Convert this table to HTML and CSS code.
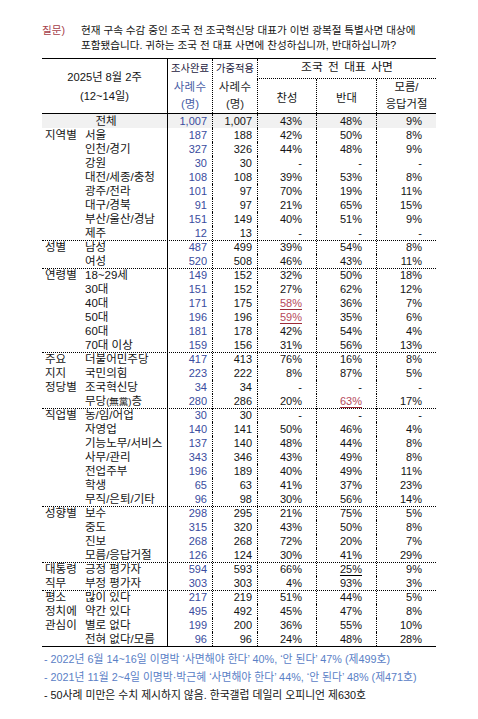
FILE: index.html
```html
<!DOCTYPE html>
<html lang="ko">
<head>
<meta charset="utf-8">
<title>조국 전 대표 사면 여론조사</title>
<link rel="stylesheet" href="styles.css">
</head>
<body>
<div class="page">
  <div class="q">
    <div class="q-label">질문)</div>
    <div class="q-text">현재 구속 수감 중인 조국 전 조국혁신당 대표가 이번 광복절 특별사면 대상에<br>포함됐습니다. 귀하는 조국 전 대표 사면에 찬성하십니까, 반대하십니까?</div>
  </div>

  <div class="tbl">
    <div class="head">
      <div class="h-label"><span>2025년 8월 2주</span><span>(12~14일)</span></div>
      <div class="h-n h-n1"><span class="h-top">조사완료</span><span class="h-mid">사례수</span><span class="h-bot">(명)</span></div>
      <div class="h-n h-n2"><span class="h-top">가중적용</span><span class="h-mid">사례수</span><span class="h-bot">(명)</span></div>
      <div class="h-title">조국 전 대표 사면</div>
      <div class="h-opt h-yes">찬성</div>
      <div class="h-opt h-no">반대</div>
      <div class="h-opt h-dk"><span>모름/</span><span>응답거절</span></div>
    </div>

    <div class="body">
      <div class="row total"><span class="g all">전체</span><span class="n1">1,007</span><span class="n2">1,007</span><span class="p">43%</span><span class="p">48%</span><span class="p">9%</span></div>

      <div class="row"><span class="g">지역별</span><span class="s">서울</span><span class="n1">187</span><span class="n2">188</span><span class="p">42%</span><span class="p">50%</span><span class="p">8%</span></div>
      <div class="row"><span class="g"></span><span class="s">인천/경기</span><span class="n1">327</span><span class="n2">326</span><span class="p">44%</span><span class="p">48%</span><span class="p">9%</span></div>
      <div class="row"><span class="g"></span><span class="s">강원</span><span class="n1">30</span><span class="n2">30</span><span class="p">-</span><span class="p">-</span><span class="p">-</span></div>
      <div class="row"><span class="g"></span><span class="s">대전/세종/충청</span><span class="n1">108</span><span class="n2">108</span><span class="p">39%</span><span class="p">53%</span><span class="p">8%</span></div>
      <div class="row"><span class="g"></span><span class="s">광주/전라</span><span class="n1">101</span><span class="n2">97</span><span class="p">70%</span><span class="p">19%</span><span class="p">11%</span></div>
      <div class="row"><span class="g"></span><span class="s">대구/경북</span><span class="n1">91</span><span class="n2">97</span><span class="p">21%</span><span class="p">65%</span><span class="p">15%</span></div>
      <div class="row"><span class="g"></span><span class="s">부산/울산/경남</span><span class="n1">151</span><span class="n2">149</span><span class="p">40%</span><span class="p">51%</span><span class="p">9%</span></div>
      <div class="row"><span class="g"></span><span class="s">제주</span><span class="n1">12</span><span class="n2">13</span><span class="p">-</span><span class="p">-</span><span class="p">-</span></div>

      <div class="row sep"><span class="g">성별</span><span class="s">남성</span><span class="n1">487</span><span class="n2">499</span><span class="p">39%</span><span class="p">54%</span><span class="p">8%</span></div>
      <div class="row"><span class="g"></span><span class="s">여성</span><span class="n1">520</span><span class="n2">508</span><span class="p">46%</span><span class="p">43%</span><span class="p">11%</span></div>

      <div class="row sep"><span class="g">연령별</span><span class="s">18~29세</span><span class="n1">149</span><span class="n2">152</span><span class="p">32%</span><span class="p">50%</span><span class="p">18%</span></div>
      <div class="row"><span class="g"></span><span class="s">30대</span><span class="n1">151</span><span class="n2">152</span><span class="p">27%</span><span class="p">62%</span><span class="p">12%</span></div>
      <div class="row"><span class="g"></span><span class="s">40대</span><span class="n1">171</span><span class="n2">175</span><span class="p"><u class="hi">58%</u></span><span class="p">36%</span><span class="p">7%</span></div>
      <div class="row"><span class="g"></span><span class="s">50대</span><span class="n1">196</span><span class="n2">196</span><span class="p"><u class="hi">59%</u></span><span class="p">35%</span><span class="p">6%</span></div>
      <div class="row"><span class="g"></span><span class="s">60대</span><span class="n1">181</span><span class="n2">178</span><span class="p">42%</span><span class="p">54%</span><span class="p">4%</span></div>
      <div class="row"><span class="g"></span><span class="s">70대 이상</span><span class="n1">159</span><span class="n2">156</span><span class="p">31%</span><span class="p">56%</span><span class="p">13%</span></div>

      <div class="row sep"><span class="g">주요</span><span class="s">더불어민주당</span><span class="n1">417</span><span class="n2">413</span><span class="p">76%</span><span class="p">16%</span><span class="p">8%</span></div>
      <div class="row"><span class="g">지지</span><span class="s">국민의힘</span><span class="n1">223</span><span class="n2">222</span><span class="p">8%</span><span class="p">87%</span><span class="p">5%</span></div>
      <div class="row"><span class="g">정당별</span><span class="s">조국혁신당</span><span class="n1">34</span><span class="n2">34</span><span class="p">-</span><span class="p">-</span><span class="p">-</span></div>
      <div class="row"><span class="g"></span><span class="s">무당<small>(無黨)</small>층</span><span class="n1">280</span><span class="n2">286</span><span class="p">20%</span><span class="p"><u class="hi">63%</u></span><span class="p">17%</span></div>

      <div class="row sep"><span class="g">직업별</span><span class="s">농/임/어업</span><span class="n1">30</span><span class="n2">30</span><span class="p">-</span><span class="p">-</span><span class="p">-</span></div>
      <div class="row"><span class="g"></span><span class="s">자영업</span><span class="n1">140</span><span class="n2">141</span><span class="p">50%</span><span class="p">46%</span><span class="p">4%</span></div>
      <div class="row"><span class="g"></span><span class="s">기능노무/서비스</span><span class="n1">137</span><span class="n2">140</span><span class="p">48%</span><span class="p">44%</span><span class="p">8%</span></div>
      <div class="row"><span class="g"></span><span class="s">사무/관리</span><span class="n1">343</span><span class="n2">346</span><span class="p">43%</span><span class="p">49%</span><span class="p">8%</span></div>
      <div class="row"><span class="g"></span><span class="s">전업주부</span><span class="n1">196</span><span class="n2">189</span><span class="p">40%</span><span class="p">49%</span><span class="p">11%</span></div>
      <div class="row"><span class="g"></span><span class="s">학생</span><span class="n1">65</span><span class="n2">63</span><span class="p">41%</span><span class="p">37%</span><span class="p">23%</span></div>
      <div class="row"><span class="g"></span><span class="s">무직/은퇴/기타</span><span class="n1">96</span><span class="n2">98</span><span class="p">30%</span><span class="p">56%</span><span class="p">14%</span></div>

      <div class="row sep"><span class="g">성향별</span><span class="s">보수</span><span class="n1">298</span><span class="n2">295</span><span class="p">21%</span><span class="p">75%</span><span class="p">5%</span></div>
      <div class="row"><span class="g"></span><span class="s">중도</span><span class="n1">315</span><span class="n2">320</span><span class="p">43%</span><span class="p">50%</span><span class="p">8%</span></div>
      <div class="row"><span class="g"></span><span class="s">진보</span><span class="n1">268</span><span class="n2">268</span><span class="p">72%</span><span class="p">20%</span><span class="p">7%</span></div>
      <div class="row"><span class="g"></span><span class="s">모름/응답거절</span><span class="n1">126</span><span class="n2">124</span><span class="p">30%</span><span class="p">41%</span><span class="p">29%</span></div>

      <div class="row sep"><span class="g">대통령</span><span class="s">긍정 평가자</span><span class="n1">594</span><span class="n2">593</span><span class="p">66%</span><span class="p"><u class="ul">25%</u></span><span class="p">9%</span></div>
      <div class="row"><span class="g">직무</span><span class="s">부정 평가자</span><span class="n1">303</span><span class="n2">303</span><span class="p">4%</span><span class="p">93%</span><span class="p">3%</span></div>

      <div class="row sep"><span class="g">평소</span><span class="s">많이 있다</span><span class="n1">217</span><span class="n2">219</span><span class="p">51%</span><span class="p">44%</span><span class="p">5%</span></div>
      <div class="row"><span class="g">정치에</span><span class="s">약간 있다</span><span class="n1">495</span><span class="n2">492</span><span class="p">45%</span><span class="p">47%</span><span class="p">8%</span></div>
      <div class="row"><span class="g">관심이</span><span class="s">별로 없다</span><span class="n1">199</span><span class="n2">200</span><span class="p">36%</span><span class="p">55%</span><span class="p">10%</span></div>
      <div class="row last"><span class="g"></span><span class="s">전혀 없다/모름</span><span class="n1">96</span><span class="n2">96</span><span class="p">24%</span><span class="p">48%</span><span class="p">28%</span></div>
    </div>
  </div>

  <div class="notes">
    <p class="note blue">- 2022년 6월 14~16일 이명박 ‘사면해야 한다’ 40%, ‘안 된다’ 47% (제499호)</p>
    <p class="note blue">- 2021년 11월 2~4일 이명박·박근혜 ‘사면해야 한다’ 44%, ‘안 된다’ 48% (제471호)</p>
    <p class="note">- 50사례 미만은 수치 제시하지 않음. 한국갤럽 데일리 오피니언 제630호</p>
  </div>
</div>
</body>
</html>
```

FILE: styles.css
```css
* {
  box-sizing: border-box;
}

body {
  margin: 0;
  background: #ffffff;
  color: #141414;
  font-family: "Liberation Sans", "Noto Sans CJK KR", sans-serif;
}

.page {
  padding: 23px 0 0 42px;
  width: 436px;
}

/* question */
.q {
  display: flex;
  font-size: 10.6px;
  line-height: 15px;
  white-space: nowrap;
}

.q-label {
  width: 39px;
  color: #a5404a;
}

/* table */
.tbl {
  width: 394px;
  margin-top: 5px;
  font-size: 11px;
}

.head {
  display: grid;
  grid-template-columns: 125px 45px 45px 59px 60px 60px;
  grid-template-rows: 20px 34px;
  border-top: 1px solid #000;
  border-bottom: 1px solid #000;
  box-sizing: content-box;
}

.h-label {
  grid-column: 1;
  grid-row: 1 / 3;
  display: flex;
  flex-direction: column;
  justify-content: center;
  align-items: center;
  line-height: 19px;
  padding-top: 2px;
  font-size: 11.2px;
}

.h-n {
  grid-row: 1 / 3;
  display: flex;
  flex-direction: column;
  align-items: center;
}

.h-n1 {
  grid-column: 2;
  border-left: 1px solid #000;
}

.h-n2 {
  grid-column: 3;
  border-left: 1px dotted #000;
}

.h-top {
  line-height: 19px;
  font-size: 10.3px;
  color: #1c2140;
  white-space: nowrap;
}

.h-mid {
  line-height: 18px;
  font-size: 11.5px;
  letter-spacing: 0.3px;
}

.h-bot {
  line-height: 16px;
  font-size: 11.5px;
}

.h-n1 .h-mid,
.h-n1 .h-bot {
  color: #4a5ea6;
}

.h-n2 .h-mid,
.h-n2 .h-bot {
  color: #2a2a2a;
}

.h-title {
  grid-column: 4 / 7;
  grid-row: 1;
  border-left: 1px dotted #000;
  border-bottom: 1px dotted #000;
  text-align: center;
  font-size: 11.8px;
  line-height: 17px;
  word-spacing: 2px;
}

.h-opt {
  grid-row: 2;
  border-left: 1px dotted #000;
  display: flex;
  flex-direction: column;
  justify-content: center;
  align-items: center;
  font-size: 11.3px;
  line-height: 17px;
}

.h-yes {
  grid-column: 4;
  padding-top: 4px;
}

.h-no {
  grid-column: 5;
  padding-top: 4px;
}

.h-dk {
  grid-column: 6;
}

/* body rows */
.body {
  border-bottom: 1px solid #000;
  box-sizing: content-box;
}

.row {
  display: grid;
  grid-template-columns: 43px 82px 45px 45px 59px 60px 60px;
  height: 14px;
  line-height: 14px;
  white-space: nowrap;
}

.row.sep {
  border-top: 1px dotted #000;
  line-height: 13px;
}

.row.total {
  background: #f1f1f1;
}

.g,
.s {
  font-size: 11.5px;
}

.g {
  padding-left: 3px;
}

.g.all {
  grid-column: 1 / 3;
  text-align: center;
}

.s {
  padding-left: 0;
}

.s small {
  font-size: 9.5px;
}

.n1,
.n2,
.p {
  text-align: right;
}

.n1 {
  border-left: 1px solid #000;
  padding-right: 5px;
  color: #3a4c9e;
}

.n2 {
  border-left: 1px dotted #000;
  padding-right: 5px;
}

.p {
  border-left: 1px dotted #000;
  padding-right: 14px;
}

u {
  text-decoration-thickness: 1px;
  text-underline-offset: 2px;
}

u.hi {
  color: #b54a5a;
  text-decoration-color: #9c2a36;
}

u.ul {
  color: #141414;
  text-decoration-color: #000;
}

/* notes */
.notes {
  margin-top: 3px;
  padding-left: 2px;
}

.note {
  margin: 0;
  font-size: 10.8px;
  line-height: 18px;
  white-space: nowrap;
}

.note.blue {
  color: #5a80c6;
}
```
